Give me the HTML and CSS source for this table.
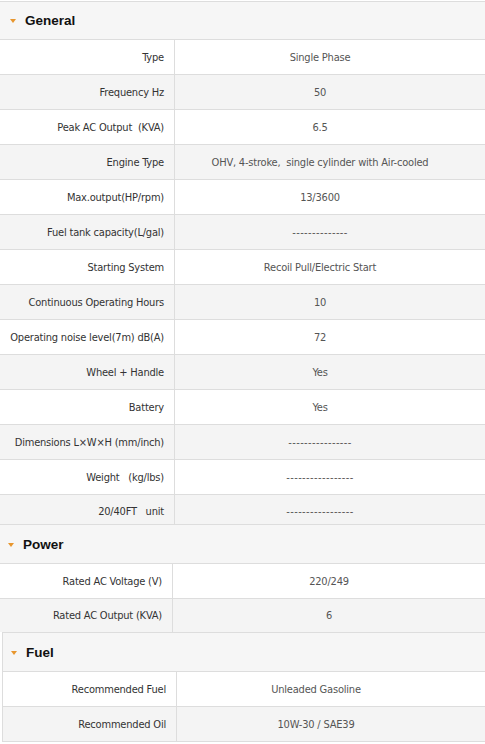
FILE: index.html
```html
<!DOCTYPE html>
<html>
<head>
<meta charset="utf-8">
<link rel="stylesheet" href="styles.css">
</head>
<body>
<section class="spec spec-general">
  <div class="spec-head"><span class="caret"></span><span class="spec-title">General</span></div>
  <div class="row"><div class="label">Type</div><div class="value">Single Phase</div></div>
  <div class="row alt"><div class="label">Frequency Hz</div><div class="value">50</div></div>
  <div class="row"><div class="label">Peak AC Output&nbsp; (KVA)</div><div class="value">6.5</div></div>
  <div class="row alt"><div class="label">Engine Type</div><div class="value">OHV, 4-stroke,&nbsp; single cylinder with Air-cooled</div></div>
  <div class="row"><div class="label">Max.output(HP/rpm)</div><div class="value">13/3600</div></div>
  <div class="row alt"><div class="label">Fuel tank capacity(L/gal)</div><div class="value dashes">--------------</div></div>
  <div class="row"><div class="label">Starting System</div><div class="value">Recoil Pull/Electric Start</div></div>
  <div class="row alt"><div class="label">Continuous Operating Hours</div><div class="value">10</div></div>
  <div class="row"><div class="label">Operating noise level(7m) dB(A)</div><div class="value">72</div></div>
  <div class="row alt"><div class="label">Wheel + Handle</div><div class="value">Yes</div></div>
  <div class="row"><div class="label">Battery</div><div class="value">Yes</div></div>
  <div class="row alt"><div class="label">Dimensions L×W×H (mm/inch)</div><div class="value dashes">----------------</div></div>
  <div class="row"><div class="label">Weight&nbsp;&nbsp; (kg/lbs)</div><div class="value dashes">-----------------</div></div>
  <div class="row alt last"><div class="label">20/40FT&nbsp;&nbsp; unit</div><div class="value dashes">-----------------</div></div>
</section>
<section class="spec spec-power">
  <div class="spec-head"><span class="caret"></span><span class="spec-title">Power</span></div>
  <div class="row"><div class="label">Rated AC Voltage (V)</div><div class="value">220/249</div></div>
  <div class="row alt last"><div class="label">Rated AC Output (KVA)</div><div class="value">6</div></div>
</section>
<section class="spec spec-fuel">
  <div class="spec-head"><span class="caret"></span><span class="spec-title">Fuel</span></div>
  <div class="row"><div class="label">Recommended Fuel</div><div class="value">Unleaded Gasoline</div></div>
  <div class="row alt"><div class="label">Recommended Oil</div><div class="value">10W-30 / SAE39</div></div>
</section>
</body>
</html>
```
FILE: styles.css
```css
html, body {
  margin: 0;
  padding: 0;
  background: #ffffff;
}
body {
  padding-top: 1px;
  font-family: "DejaVu Sans Condensed", "Liberation Sans", sans-serif;
  font-size: 11px;
  letter-spacing: -0.2px;
  color: #333333;
}
.spec {
  --lw: 175px;
  --vpad: 20px;
  display: flex;
  flex-direction: column;
}
.spec-general {
  border-top: 1px solid #dddddd;
}
.spec-power {
  --lw: 173px;
  --vpad: 0px;
}
.spec-fuel {
  --lw: 174px;
  --vpad: 30px;
  margin-left: 2px;
  border-left: 1px solid #dddddd;
  border-top: 1px solid #dddddd;
}
.spec-head {
  height: 37px;
  display: flex;
  align-items: center;
  gap: 9px;
  padding-left: 10px;
  background: #f6f6f6;
  border-bottom: 1px solid #dddddd;
}
.spec-power .spec-head {
  height: 38px;
  padding-left: 8px;
}
.spec-fuel .spec-head {
  height: 38px;
  padding-left: 8px;
}
.caret {
  width: 0;
  height: 0;
  border-left: 3.5px solid transparent;
  border-right: 3.5px solid transparent;
  border-top: 4px solid #e8962e;
  margin-top: 1px;
}
.spec-title {
  font-family: "Liberation Sans", Arial, sans-serif;
  font-weight: bold;
  font-size: 13.5px;
  letter-spacing: 0;
  color: #111111;
}
.row {
  display: grid;
  grid-template-columns: var(--lw) 1fr;
  height: 35px;
  box-sizing: border-box;
  border-bottom: 1px solid #dddddd;
  background: #ffffff;
}
.row.alt {
  background: #f4f4f4;
}
.spec-general .row.last {
  height: 30px;
  padding-top: 4px;
}
.spec-general .row.last .label {
  border-right-color: transparent;
}
.spec-general .row.last {
  background-image: linear-gradient(#dddddd, #dddddd);
  background-size: 1px 100%;
  background-position: 174px 0;
  background-repeat: no-repeat;
}
.spec-power .row.last {
  height: 33px;
  border-bottom: none;
}
.label {
  display: flex;
  align-items: center;
  justify-content: flex-end;
  padding-right: 10px;
  border-right: 1px solid #dddddd;
  color: #333333;
  white-space: nowrap;
}
.value {
  display: flex;
  align-items: center;
  justify-content: center;
  padding-right: var(--vpad);
  color: #555555;
  white-space: nowrap;
}
.value.dashes {
  letter-spacing: 0.4px;
}
```
